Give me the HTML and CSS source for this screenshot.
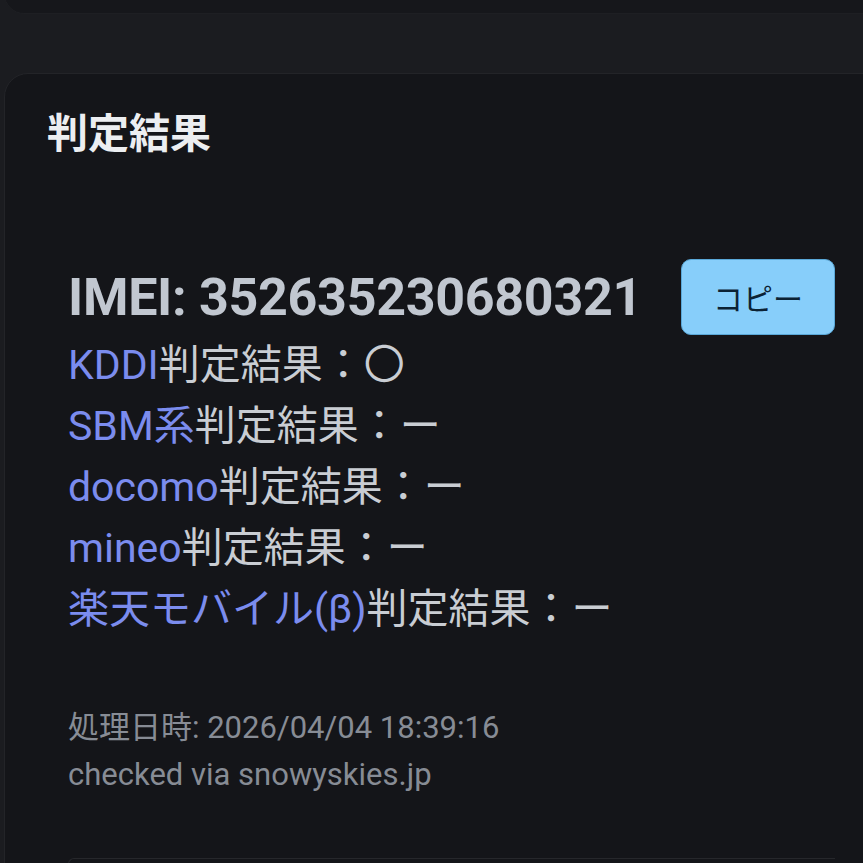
FILE: index.html
```html
<!DOCTYPE html>
<html lang="ja">
<head>
  <meta charset="UTF-8" />
  <meta name="viewport" content="width=device-width, initial-scale=1.0"/>
  <title>判定結果</title>
  <link rel="stylesheet" href="styles.css">
</head>
<body>
<div class="page">
  <div class="card prev"></div>

  <section class="card result">
    <h2 class="title">判定結果</h2>

    <div class="box">
      <div class="imei-row">
        <div class="imei">IMEI: 352635230680321</div>
        <button class="copy">コピー</button>
      </div>
      <ul class="lines">
        <li><a href="#">KDDI</a>判定結果：〇</li>
        <li><a href="#">SBM系</a>判定結果：ー</li>
        <li><a href="#">docomo</a>判定結果：ー</li>
        <li><a href="#">mineo</a>判定結果：ー</li>
        <li><a href="#">楽天モバイル(β)</a>判定結果：ー</li>
      </ul>
      <div class="meta">
        <div>処理日時: 2026/04/04 18:39:16</div>
        <div>checked via snowyskies.jp</div>
      </div>
    </div>

    <div class="next"></div>
  </section>
</div>
</body>
</html>
```

FILE: styles.css
```css
html, body {
  margin: 0;
  padding: 0;
  background: #1b1c20;
  overflow: hidden;
}
body {
  font-family: Roboto, "Noto Sans CJK JP", sans-serif;
  color: #c9cdd3;
}
.page {
  background: linear-gradient(to bottom, #17181c 12px, #25262a 13px, #1c1d21 60px, #1b1c20 72px);
  min-height: 863px;
}
.card {
  background: #141519;
  border: 1px solid #232428;
  border-radius: 24px;
  margin-left: 4px;
  margin-right: -40px;
}
.prev {
  height: 212px;
  margin-top: -200px;
  border-radius: 20px;
  border-color: #1e1f23;
  background: #16171b;
}
.result {
  margin-top: 59px;
  padding: 30px 67px 0 42px;
}
.title {
  margin: 0;
  font-size: 41px;
  font-weight: 700;
  color: #eceef1;
  line-height: 60px;
}
.box {
  padding: 95px 0 0 21px;
}
.imei-row {
  display: flex;
  align-items: center;
  justify-content: space-between;
  height: 76px;
}
.imei {
  font-size: 52px;
  font-weight: 700;
  color: #c1c7d0;
  letter-spacing: -0.3px;
}
.copy {
  width: 154px;
  height: 76px;
  background: #87cefa;
  border: 1px solid #5aa8d8;
  border-radius: 10px;
  font-family: Roboto, "Noto Sans CJK JP", sans-serif;
  font-size: 30px;
  color: #0b2234;
  cursor: pointer;
}
.lines {
  list-style: none;
  margin: 0;
  padding: 0;
}
.lines li {
  font-size: 41px;
  line-height: 61px;
}
.lines a {
  color: #7b8cee;
  text-decoration: none;
}
.meta {
  margin-top: 64px;
  font-size: 31px;
  line-height: 47px;
  color: #878c95;
}
.next {
  margin: 60px 0 0 21px;
  height: 40px;
  border-top: 1px solid #26272b;
  border-left: 1px solid #26272b;
  border-top-left-radius: 6px;
}
```
